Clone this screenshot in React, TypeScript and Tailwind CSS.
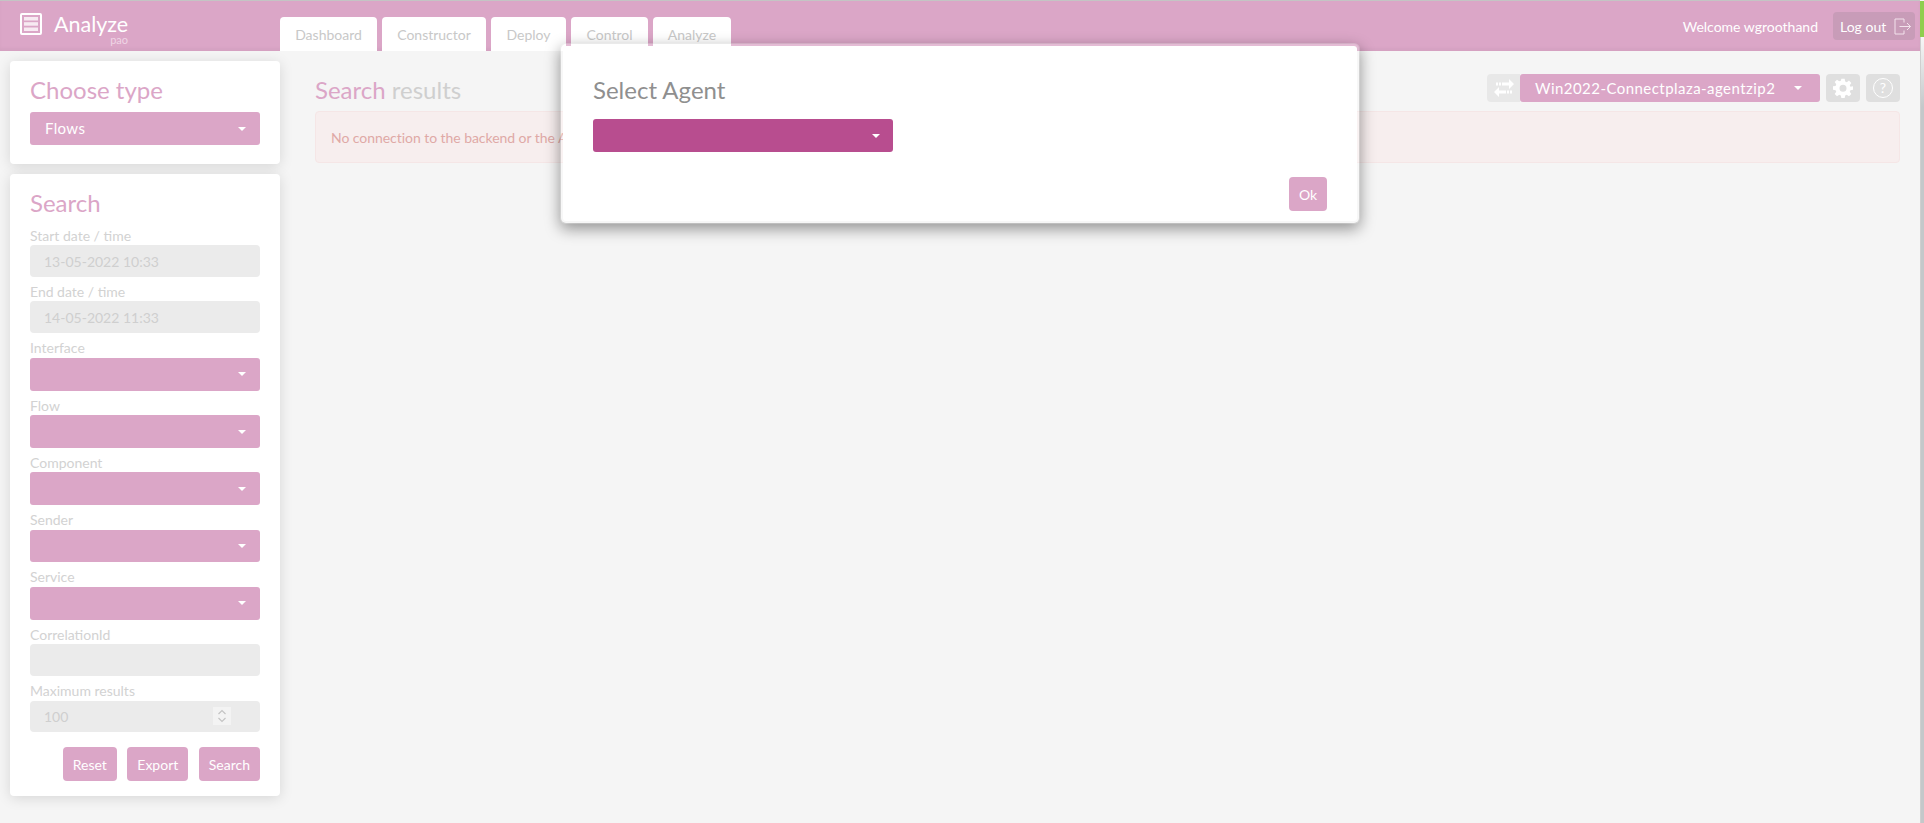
import React from "react";

const P = "bg-[#dba6c7]";

function Caret({ className = "" }: { className?: string }) {
  return <span className={"w-0 h-0 border-x-[4px] border-x-transparent border-t-[4px] border-t-white " + className} />;
}

function Select({ children, mt = "", h = "h-[32.75px]" }: { children?: React.ReactNode; mt?: string; h?: string }) {
  return (
    <div className={`${P} ${mt} ${h} rounded-[3px] flex items-center justify-between pl-[15px] pr-[14px] text-white text-[15px] tracking-[0.35px]`}>
      <span>{children}</span>
      <Caret />
    </div>
  );
}

function Label({ children }: { children: React.ReactNode }) {
  return <div className="h-[24.5px] text-[14px] leading-[20px] text-[#d2d2d2] pt-[5px]">{children}</div>;
}

function Input({ value, spinner }: { value?: string; spinner?: boolean }) {
  return (
    <div className="h-[31.9px] rounded-[4px] bg-[#ebebeb] flex items-center justify-between pl-[14px] pr-[29px] text-[14px] text-[#cfcfcf]">
      <span>{value}</span>
      {spinner && (
        <span className="w-[18px] h-[18px] bg-[#f3f3f3] flex items-center justify-center">
          <svg width="10" height="14" viewBox="0 0 10 14" fill="none" stroke="#c4c4c4" strokeWidth="1.2">
            <path d="M1.5 5 5 1.5 8.5 5M1.5 9 5 12.5 8.5 9" />
          </svg>
        </span>
      )}
    </div>
  );
}

function Btn({ children }: { children: React.ReactNode }) {
  return <div className={`${P} h-[34px] px-[10px] rounded-[4px] flex items-center text-white text-[14px]`}>{children}</div>;
}

const tabs: [string, string][] = [
  ["Dashboard", "w-[97px]"],
  ["Constructor", "w-[104px]"],
  ["Deploy", "w-[75px]"],
  ["Control", "w-[77px]"],
  ["Analyze", "w-[78px]"],
];

export default function App() {
  return (
    <div className="relative w-[1924px] h-[823px] overflow-hidden bg-[#f5f5f5] font-['Lato','Liberation_Sans',sans-serif]">
      <header className={`${P} h-[51px] border-t border-t-[#c4c4c4] w-[1920px] flex items-start relative shadow-[inset_0_-3px_3px_rgba(0,0,0,0.03)]`}>
        <div className="w-[280px] pl-[20px] pt-[9px] flex items-start shrink-0">
          <svg width="22" height="22" viewBox="0 0 22 22" className="mt-[3px]" fill="none">
            <rect x="1" y="1" width="20" height="20" stroke="white" strokeWidth="2" rx="1" />
            <rect x="4" y="4" width="14" height="3.5" fill="#f7eaf2" />
            <rect x="4" y="9.2" width="14" height="3.5" fill="#f7eaf2" />
            <rect x="4" y="14.5" width="14" height="3.5" fill="#f7eaf2" />
          </svg>
          <div className="ml-[12px] mt-[4px] w-[74px] text-white flex flex-col items-end">
            <div className="text-[21.5px] leading-[20px] w-full">Analyze</div>
            <div className="text-[11px] leading-[11px] text-[#efd5e5]">pao</div>
          </div>
        </div>
        <nav className="flex gap-[5px] mt-[16px]">
          {tabs.map(([t, w]) => (
            <div key={t} className={`${w} h-[34px] bg-white rounded-t-[4px] flex items-center justify-center text-[14px] text-[#c8c8c8]`}>
              {t}
            </div>
          ))}
        </nav>
        <div className="ml-auto flex items-center mt-[11px] mr-[5px]">
          <span className="text-white text-[14px] mr-[15px]">Welcome wgroothand</span>
          <div className="w-[82px] h-[28px] rounded-[4px] bg-[#c89cb8] flex items-center pl-[7px] gap-[8px] text-white text-[14px]">
            Log out
            <svg width="17" height="17" viewBox="0 0 17 17" fill="none" stroke="#f3e2ec" strokeWidth="1">
              <path d="M10 4.5V1H1v15h9v-3.5M5.5 8.5h11M13 5l3.5 3.5L13 12" />
            </svg>
          </div>
        </div>
      </header>
      <div className="absolute right-0 top-[1px] w-[4px] h-[36px] bg-[#8fce4e]" />
      <div className="absolute right-0 top-[37px] bottom-0 w-[4px] border-l border-l-[#cfcfcf] bg-[linear-gradient(#f7f7f7,#c4c8ca_70px)]" />

      <div className="flex items-start pl-[10px] pr-[10px] pt-[10px]">
        <aside className="w-[270px] shrink-0">
          <section className="h-[103px] bg-white rounded-[4px] shadow-[0_2px_14px_rgba(0,0,0,0.13)] px-[20px] pt-[12px]">
            <h2 className="text-[24px] leading-[34px] text-[#dba6c7]">Choose type</h2>
            <Select mt="mt-[5px]" h="h-[33px]">Flows</Select>
          </section>
          <section className="mt-[10px] h-[622px] bg-white rounded-[4px] shadow-[0_2px_14px_rgba(0,0,0,0.13)] px-[20px] pt-[12px]">
            <h2 className="text-[24px] leading-[34px] text-[#dba6c7] mb-[0.6px]">Search</h2>
            <Label>Start date / time</Label>
            <Input value="13-05-2022 10:33" />
            <Label>End date / time</Label>
            <Input value="14-05-2022 11:33" />
            <Label>Interface</Label>
            <Select />
            <Label>Flow</Label>
            <Select />
            <Label>Component</Label>
            <Select />
            <Label>Sender</Label>
            <Select />
            <Label>Service</Label>
            <Select />
            <Label>CorrelationId</Label>
            <Input />
            <Label>Maximum results</Label>
            <Input value="100" spinner />
            <div className="flex justify-end gap-[10.5px] mt-[14.6px]">
              <Btn>Reset</Btn>
              <Btn>Export</Btn>
              <Btn>Search</Btn>
            </div>
          </section>
        </aside>

        <main className="flex-1 ml-[35px] mr-[14px] pt-[13px]">
          <div className="flex items-center justify-between h-[28px]">
            <h2 className="text-[24px] leading-[34px] pt-[4px]">
              <span className="text-[#dba6c7]">Search</span> <span className="text-[#cfcfcf]">results</span>
            </h2>
            <div className="flex items-center">
              <div className="w-[33px] h-[28px] rounded-l-[4px] bg-[#e8e8e8] flex items-center justify-center">
                <svg width="20" height="18" viewBox="0 0 20 18" fill="white">
                  <path d="M2 3.5h2v3H2zM5 3.5h2v3H5zM8 3.5h7V0l5 5-5 5V6.5H8zM13 11.5h2v3h-2zM16 11.5h2v3h-2zM12 11.5H5V8l-5 5 5 5v-3.5h7z" />
                </svg>
              </div>
              <div className={`${P} w-[300px] h-[28px] rounded-[3px] flex items-center justify-between pl-[15px] pr-[18px] text-white text-[15px] tracking-[0.45px]`}>
                <span>Win2022-Connectplaza-agentzip2</span>
                <Caret />
              </div>
              <div className="w-[34px] h-[28px] ml-[6px] rounded-[4px] bg-[#dfdfdf] flex items-center justify-center">
                <svg width="20" height="20" viewBox="0 0 24 24" fill="white">
                  <path fillRule="evenodd" d="M10 1h4l.6 3.2 1.9.8 2.7-1.9 2.8 2.8-1.9 2.7.8 1.9L24 10v4l-3.1.6-.8 1.9 1.9 2.7-2.8 2.8-2.7-1.9-1.9.8L14 24h-4l-.6-3.1-1.9-.8-2.7 1.9L2 19.2l1.9-2.7-.8-1.9L0 14v-4l3.1-.5.8-1.9L2 4.9l2.8-2.8 2.7 1.9 1.9-.8zM12 8.2a4.2 4.2 0 1 0 0 8.4 4.2 4.2 0 0 0 0-8.4z" />
                </svg>
              </div>
              <div className="w-[34px] h-[28px] ml-[6px] rounded-[4px] bg-[#dfdfdf] flex items-center justify-center">
                <span className="w-[20px] h-[20px] rounded-full border border-white flex items-center justify-center text-white text-[14px] leading-none">?</span>
              </div>
            </div>
          </div>
          <div className="mt-[9px] h-[52px] rounded-[4px] border border-[#f5e6e6] bg-[#f7eeee] flex items-center pl-[15px] pt-[1px] text-[14px] tracking-[-0.05px] text-[#dfa9a6]">
            No connection to the backend or the Agent
          </div>
        </main>
      </div>

      <div className="absolute left-[560px] top-[43px] w-[800px] h-[181px] rounded-[6px] border-[3px] border-[#ffffff40] bg-clip-padding shadow-[0_5px_15px_rgba(0,0,0,0.4)] bg-white px-[30px] pt-[27px]">
        <h3 className="text-[24px] leading-[34px] text-[#8f8f8f]">Select Agent</h3>
        <div className="mt-[12px] w-[300px] h-[33px] rounded-[3px] bg-[#b84d8f] flex items-center justify-end pr-[13px]">
          <Caret />
        </div>
        <div className={`${P} absolute left-[726px] top-[131px] w-[38px] h-[34px] rounded-[4px] flex items-center justify-center text-white text-[14px]`}>
          Ok
        </div>
      </div>
    </div>
  );
}
